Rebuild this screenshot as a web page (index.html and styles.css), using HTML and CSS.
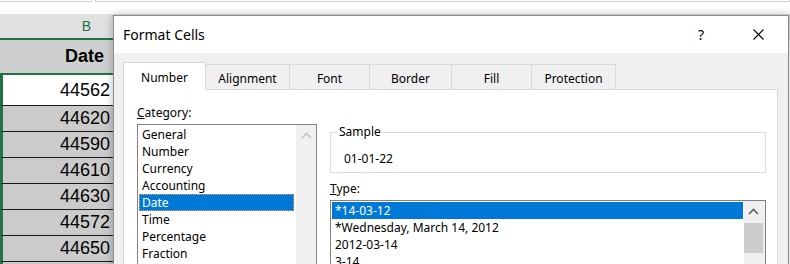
FILE: index.html
```html
<!DOCTYPE html>
<html lang="en">
<head>
    <meta charset="UTF-8">
    <title>Format Cells</title>
    <link rel="stylesheet" href="styles.css">
</head>
<body>

<!-- Worksheet behind the dialog -->
<div class="sheet">
    <div class="topbar">
        <div class="box box-name"></div>
        <div class="box box-formula"></div>
    </div>
    <div class="row col-head">
        <div class="cell col-b">B</div>
        <div class="rest"></div>
    </div>
    <div class="row">
        <div class="cell col-b head">Date</div>
    </div>
    <div class="row">
        <div class="cell col-b sel active">44562</div>
    </div>
    <div class="row"><div class="cell col-b sel">44620</div></div>
    <div class="row"><div class="cell col-b sel">44590</div></div>
    <div class="row"><div class="cell col-b sel">44610</div></div>
    <div class="row"><div class="cell col-b sel">44630</div></div>
    <div class="row"><div class="cell col-b sel">44572</div></div>
    <div class="row"><div class="cell col-b sel">44650</div></div>
    <div class="row"><div class="cell col-b sel"></div></div>
</div>

<!-- Format Cells dialog window -->
<div class="dialog">
    <div class="titlebar">
        <div class="title">Format Cells</div>
        <div class="tbtn help">?</div>
        <div class="tbtn">
            <svg width="11" height="11" viewBox="0 0 11 11"><path d="M0.5 0.5 L10.5 10.5 M10.5 0.5 L0.5 10.5" stroke="#000" stroke-width="1.1" fill="none"/></svg>
        </div>
    </div>

    <div class="dlg-body">
        <div class="tabs">
            <div class="tab current" style="width:83px">Number</div>
            <div class="tab" style="width:85px">Alignment</div>
            <div class="tab" style="width:81px">Font</div>
            <div class="tab" style="width:83px">Border</div>
            <div class="tab" style="width:81px">Fill</div>
            <div class="tab" style="width:85px">Protection</div>
        </div>

        <div class="panel">
            <!-- Category column -->
            <div class="left-col">
                <div class="label"><u>C</u>ategory:</div>
                <div class="listbox cat-list">
                    <div class="items">
                        <div class="item">General</div>
                        <div class="item">Number</div>
                        <div class="item">Currency</div>
                        <div class="item">Accounting</div>
                        <div class="item selected focused">Date</div>
                        <div class="item">Time</div>
                        <div class="item">Percentage</div>
                        <div class="item">Fraction</div>
                    </div>
                    <div class="scroll">
                        <div class="scroll-up">
                            <svg width="11" height="7" viewBox="0 0 11 7"><polyline points="1,6 5.5,1.5 10,6" stroke="#c3c3c3" stroke-width="1.6" fill="none"/></svg>
                        </div>
                    </div>
                </div>
            </div>

            <!-- Sample + Type column -->
            <div class="right-col">
                <fieldset class="sample">
                    <legend>Sample</legend>
                    <div class="sample-value">01-01-22</div>
                </fieldset>
                <div class="label type-label"><u>T</u>ype:</div>
                <div class="listbox type-list">
                    <div class="items">
                        <div class="item selected">*14-03-12</div>
                        <div class="item">*Wednesday, March 14, 2012</div>
                        <div class="item">2012-03-14</div>
                        <div class="item">3-14</div>
                    </div>
                    <div class="scroll">
                        <div class="scroll-up">
                            <svg width="11" height="7" viewBox="0 0 11 7"><polyline points="1,6 5.5,1.5 10,6" stroke="#606060" stroke-width="1.6" fill="none"/></svg>
                        </div>
                        <div class="thumb"></div>
                    </div>
                </div>
            </div>
        </div>
    </div>
</div>

</body>
</html>
```

FILE: styles.css
```css
body {
    margin: 0;
    width: 790px;
    height: 264px;
    overflow: hidden;
    background-color: #fff;
    position: relative;
    font-family: 'Liberation Sans', Arial, sans-serif;
}

/* Worksheet */
.topbar {
    height: 14px;
    display: flex;
    gap: 3px;
}

.box {
    height: 1px;
    border: 1px solid #d0d0d0;
    border-top: none;
}

.box-name {
    width: 91px;
    border-left: none;
}

.box-formula {
    flex: 1;
}

.row {
    display: flex;
}

.cell {
    box-sizing: border-box;
    width: 113px;
    text-align: right;
    font-size: 18px;
    color: #000;
}

.col-head {
    height: 26px;
    background-color: #e1e1e1;
}

.col-head .col-b {
    height: 26px;
    font-size: 14px;
    line-height: 24px;
    color: #217346;
    padding-right: 22px;
    border-bottom: 2px solid #217346;
}

.col-head .rest {
    flex: 1;
}

.head {
    height: 33px;
    line-height: 33px;
    font-weight: bold;
    background-color: #cfcfcf;
    padding-right: 9px;
}

.sel {
    height: 26px;
    line-height: 25px;
    background-color: #cbcbcb;
    border-left: 3px solid #217346;
    border-bottom: 1px solid #1a1a1a;
    padding-right: 3px;
}

.sel.active {
    height: 33px;
    line-height: 30px;
    background-color: #fff;
    border-top: 2px solid #217346;
}

/* Dialog window */
.dialog {
    position: absolute;
    left: 113px;
    top: 15px;
    width: 676px;
    height: 270px;
    box-sizing: border-box;
    border: 1px solid #8c8c8c;
    background-color: #f0f0f0;
    box-shadow: 0 0 9px rgba(0, 0, 0, 0.28);
    font-family: 'Noto Sans', sans-serif;
    font-size: 12px;
    color: #000;
}

.titlebar {
    height: 37px;
    background-color: #fff;
    display: flex;
    align-items: center;
    padding: 0 7px 0 9px;
}

.title {
    flex: 1;
    font-size: 14px;
    padding-bottom: 1px;
}

.tbtn {
    width: 46px;
    height: 37px;
    display: flex;
    align-items: center;
    justify-content: center;
    font-size: 14px;
}

.tbtn.help {
    margin-right: 11px;
}

.dlg-body {
    padding: 9px 10px 0 9px;
}

/* Tabs */
.tabs {
    display: flex;
    align-items: flex-end;
    height: 27px;
}

.tab {
    box-sizing: border-box;
    height: 25px;
    border: 1px solid #d9d9d9;
    border-bottom: none;
    margin-left: -1px;
    padding-top: 2px;
    display: flex;
    align-items: center;
    justify-content: center;
}

.tab:first-child {
    margin-left: 0;
}

.tab.current {
    height: 28px;
    margin-bottom: -1px;
    padding-top: 1px;
    background-color: #fff;
    position: relative;
    z-index: 1;
}

.panel {
    height: 200px;
    background-color: #fff;
    border: 1px solid #d9d9d9;
    padding: 14px 11px 0 13px;
    display: flex;
    gap: 13px;
}

.left-col {
    width: 180px;
}

.right-col {
    flex: 1;
    padding-top: 20px;
}

.label {
    height: 17px;
    line-height: 17px;
    margin-bottom: 3px;
}

/* List boxes */
.listbox {
    display: flex;
    border: 1px solid #828282;
    background-color: #fff;
    height: 200px;
}

.items {
    flex: 1;
    padding: 1px 2px 1px 1px;
}

.item {
    height: 17px;
    line-height: 17px;
    padding-left: 3px;
    white-space: nowrap;
}

.item.selected {
    background-color: #0078d7;
    color: #fff;
}

.item.focused {
    outline: 1px dotted #f3a53c;
    outline-offset: -1px;
}

.scroll {
    width: 20px;
    background-color: #f0f0f0;
}

.scroll-up {
    height: 21px;
    display: flex;
    align-items: center;
    justify-content: center;
}

.type-list .items {
    padding-right: 1px;
}

.type-list .scroll {
    width: 21px;
}

.type-list .scroll-up {
    padding-right: 3px;
}

.thumb {
    height: 30px;
    margin: 1px 2px 0 0;
    background-color: #cdcdcd;
}

/* Sample group */
.sample {
    margin: 0;
    min-width: 0;
    border: 1px solid #dcdcdc;
    padding: 10px 13px 5px;
}

.sample legend {
    padding: 0 2px;
    margin-left: -7px;
    line-height: 16px;
}

.sample-value {
    height: 17px;
    line-height: 17px;
}

.type-label {
    margin-top: 7px;
}
```
